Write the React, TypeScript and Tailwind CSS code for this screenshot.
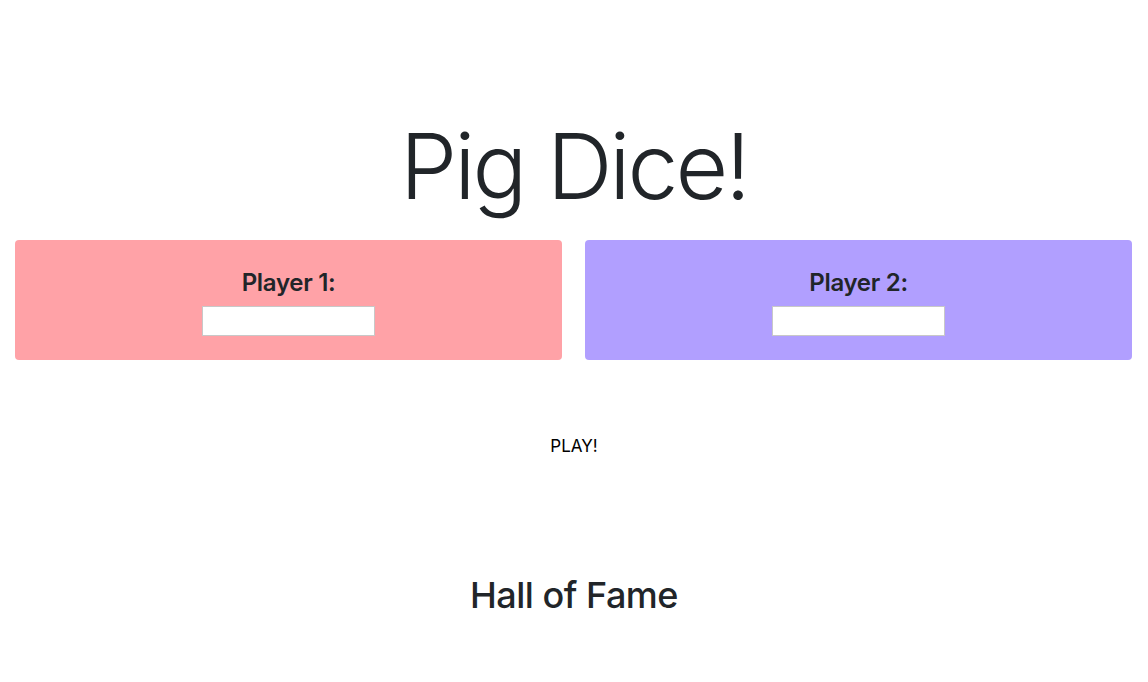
export default function App() {
  return (
    <div className="min-h-[682px] bg-white text-[#212529] font-['Inter',sans-serif]">
      <h1 className="pt-[112px] text-center text-[91px] font-light leading-[1.2] tracking-[-3px]">Pig Dice!</h1>
      <div className="flex gap-[23px] pl-[15px] pr-[16px] mt-[19px]">
        <div className="flex-1 h-[120px] rounded bg-[#ffa2a7] flex flex-col items-center pt-[29px]">
          <h4 className="text-[24px] font-semibold leading-[1.2] tracking-[-0.3px]">Player 1:</h4>
          <input className="mt-[8px] w-[173px] h-[30px] bg-white border border-[#c8c8c8]" />
        </div>
        <div className="flex-1 h-[120px] rounded bg-[#b19fff] flex flex-col items-center pt-[29px]">
          <h4 className="text-[24px] font-semibold leading-[1.2] tracking-[-0.3px]">Player 2:</h4>
          <input className="mt-[8px] w-[173px] h-[30px] bg-white border border-[#c8c8c8]" />
        </div>
      </div>
      <div className="flex justify-center mt-[74px]">
        <button className="text-[17px] text-black">PLAY!</button>
      </div>
      <h2 className="mt-[114px] text-center text-[36px] font-medium leading-[1.2] tracking-[-0.5px]">Hall of Fame</h2>
    </div>
  )
}
